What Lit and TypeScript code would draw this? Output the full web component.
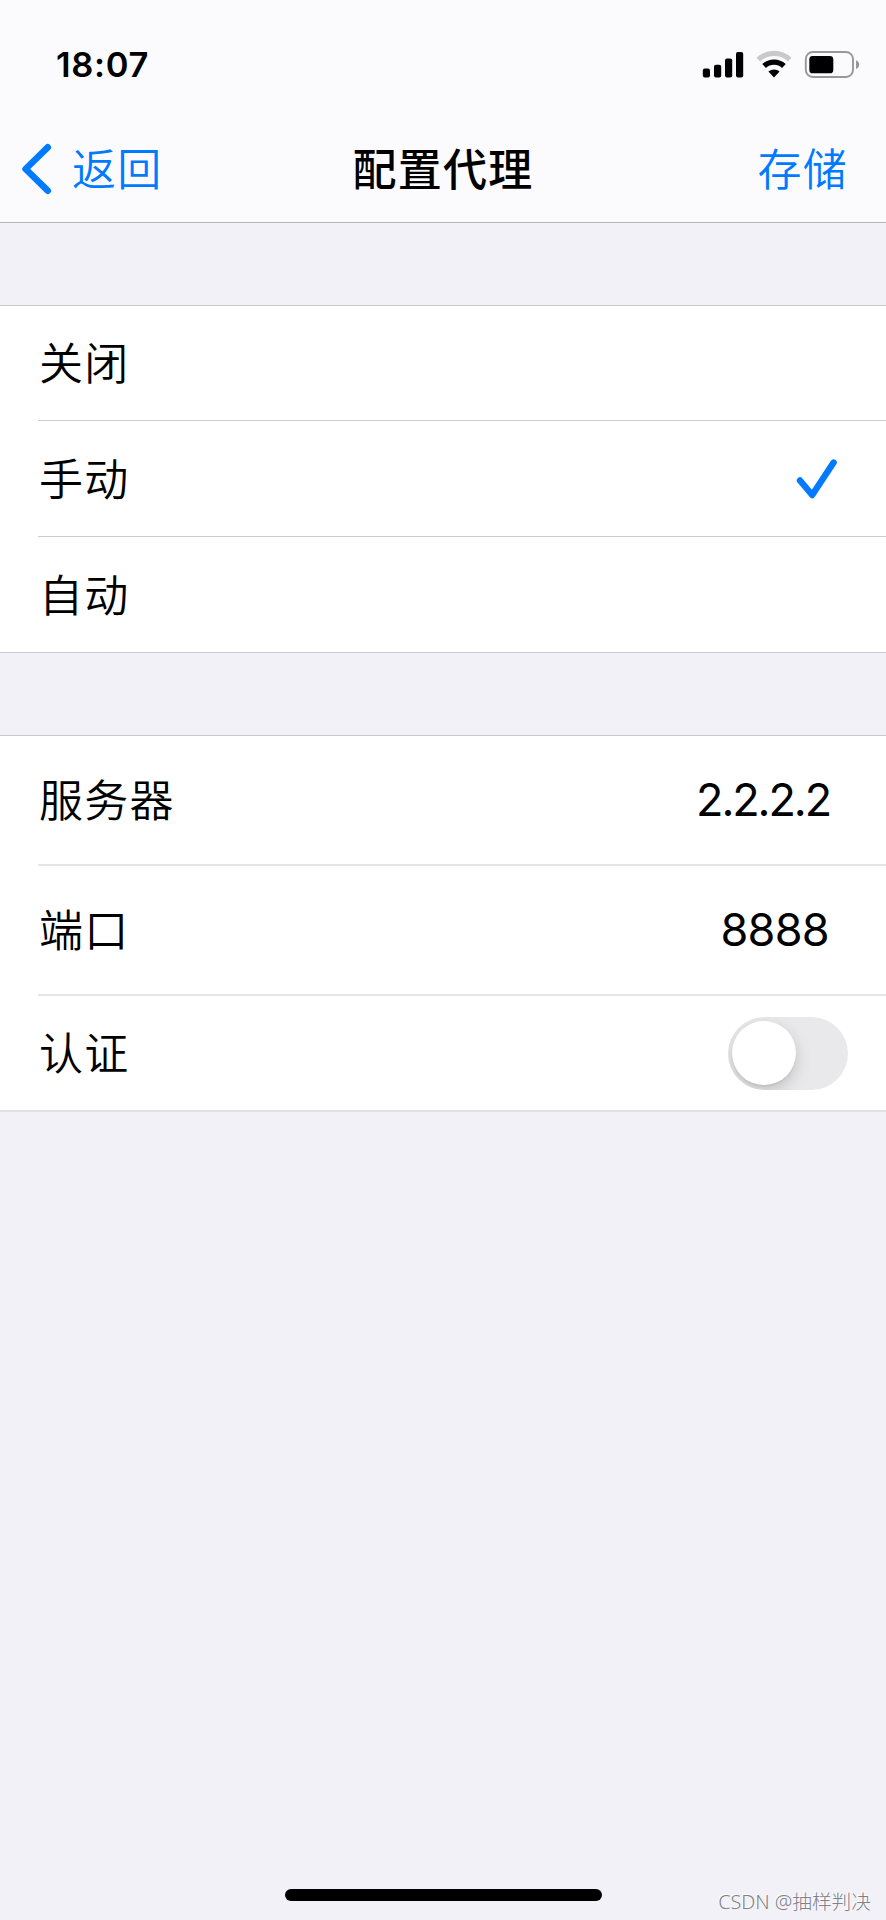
import { LitElement, html, css } from "lit";
import { customElement, property, state } from "lit/decorators.js";

const FONT = css`Inter, "Noto Sans CJK SC", sans-serif`;

@customElement("status-bar")
class StatusBar extends LitElement {
  static styles = css`
    :host { display: flex; height: 116px; padding: 0 26px 0 56px; justify-content: space-between; align-items: flex-start; box-sizing: border-box; }
    .time { font: 600 34.5px/42px ${FONT}; margin-top: 44px; letter-spacing: 0.7px; }
    .icons { display: flex; margin-top: 50px; }
    svg { display: block; }
    .signal { margin-right: 12px; }
    .wifi { margin-right: 12px; }
  `;
  render() {
    return html`
      <span class="time">18:07</span>
      <div class="icons">
        <svg class="signal" width="42" height="28" viewBox="0 0 42 28">
          <rect x="0.8" y="18.6" width="7.2" height="9" rx="2" />
          <rect x="12" y="14.7" width="7.2" height="12.9" rx="2" />
          <rect x="23" y="8.4" width="7.2" height="19.2" rx="2" />
          <rect x="34" y="2" width="7.2" height="25.6" rx="2" />
        </svg>
        <svg class="wifi" width="36" height="28" viewBox="0 0 36 28">
          <path d="M2.3 9.6A23 23 0 0 1 33.7 9.6" fill="none" stroke="#c9c9cb" stroke-width="5.2" />
          <path d="M8.1 16A14.6 14.6 0 0 1 27.9 16" fill="none" stroke="#000" stroke-width="5.4" />
          <path d="M12.4 21.6A8.3 8.3 0 0 1 23.6 21.6L18 27.4Z" />
        </svg>
        <svg width="56" height="28" viewBox="0 0 56 28">
          <rect x="1.8" y="2" width="47.2" height="25" rx="7" fill="none" stroke="#98989b" stroke-width="1.9" />
          <rect x="5.3" y="6" width="24" height="17.3" rx="3.4" />
          <path d="M52 10.2C56.3 11.6 56.3 17.6 52 19Z" fill="#98989b" />
        </svg>
      </div>
    `;
  }
}

@customElement("nav-bar")
class NavBar extends LitElement {
  static styles = css`
    :host { display: grid; grid-template-columns: 1fr auto 1fr; align-items: center; height: 107px; padding: 1px 21px 0; box-sizing: border-box; border-bottom: 1px solid #b6b6bb; font: 350 44px/60px ${FONT}; letter-spacing: 1.3px; }
    .back, .save { color: #007aff; }
    .back { display: flex; align-items: center; gap: 20px; }
    .back svg { margin-bottom: 2px; }
    .save { text-align: right; margin-right: 17px; }
    .title { font-weight: 500; }
  `;
  render() {
    return html`
      <div class="back">
        <svg width="31" height="52" viewBox="0 0 31 52"><path d="M26.7 4.3L4.6 26L26.7 47.7" fill="none" stroke="#007aff" stroke-width="6.6" stroke-linecap="round" stroke-linejoin="round" /></svg>
        <span>返回</span>
      </div>
      <div class="title">配置代理</div>
      <div class="save">存储</div>
    `;
  }
}

@customElement("toggle-switch")
class ToggleSwitch extends LitElement {
  static styles = css`
    :host { display: block; }
    .track { display: flex; align-items: center; width: 120px; height: 73px; padding: 0 5px 0 4px; box-sizing: border-box; border-radius: 37px; background: #e9e9eb; overflow: hidden; }
    .on { justify-content: flex-end; background: #34c759; }
    .knob { width: 64px; height: 64px; border-radius: 50%; background: #fff; box-shadow: 0 6px 16px rgba(0, 0, 0, 0.17), 0 2px 2px rgba(0, 0, 0, 0.05); }
  `;
  @property({ type: Boolean }) on = false;
  render() {
    return html`<div class="track ${this.on ? "on" : ""}"><div class="knob"></div></div>`;
  }
}

@customElement("app-root")
class AppRoot extends LitElement {
  static styles = css`
    :host { display: flex; flex-direction: column; position: relative; height: 1920px; background: #f2f1f8; color: #000; font: 400 44px/60px ${FONT}; }
    .top { background: #fbfbfd; }
    .group { background: #fff; border-top: 1px solid #c9c8ce; border-bottom: 1px solid #c9c8ce; padding-left: 38px; }
    .modes { margin-top: 82px; }
    .details { margin-top: 82px; border-bottom: 2px solid #dfdfe4; }
    .row { display: flex; align-items: center; justify-content: space-between; box-sizing: border-box; height: 116px; border-bottom: 1px solid #cdcdcf; }
    .modes .row:first-child { height: 115px; }
    .modes .row:last-child { border-bottom: 0; height: 115px; }
    .details .row { height: 130px; border-bottom: 2px solid #e5e5e6; }
    .details .row:last-child { border-bottom: 0; height: 114px; }
    .label { letter-spacing: 1.3px; font-weight: 350; margin-left: 1px; padding-top: 2px; }
    .value { font-size: 45px; margin-right: 57px; letter-spacing: -0.7px; }
    .address { letter-spacing: -2.1px; margin-right: 56px; }
    .check { margin-right: 48px; }
    toggle-switch { margin-right: 38px; }
    .home { width: 317px; height: 12px; border-radius: 6px; background: #000; margin: auto auto 19px 285px; }
    .mark { position: absolute; right: 15px; bottom: 3px; font: 300 19.7px/30px "Noto Sans", "Noto Sans CJK SC", sans-serif; color: #808084; text-shadow: -1px -1px 0 #fff; }
  `;
  @state() mode = "手动";
  render() {
    return html`
      <div class="top"><status-bar></status-bar><nav-bar></nav-bar></div>
      <div class="group modes">
        ${["关闭", "手动", "自动"].map(
          (m) => html`<div class="row" @click=${() => (this.mode = m)}>
            <span class="label">${m}</span>
            ${m === this.mode
              ? html`<svg class="check" width="42" height="42" viewBox="0 0 42 42"><path d="M4 22.5L16.2 37L37.6 4.5" fill="none" stroke="#007aff" stroke-width="6.4" stroke-linecap="round" stroke-linejoin="round" /></svg>`
              : ""}
          </div>`
        )}
      </div>
      <div class="group details">
        <div class="row"><span class="label">服务器</span><span class="value address">2.2.2.2</span></div>
        <div class="row"><span class="label">端口</span><span class="value">8888</span></div>
        <div class="row"><span class="label">认证</span><toggle-switch></toggle-switch></div>
      </div>
      <div class="home"></div>
      <div class="mark">CSDN @抽样判决</div>
    `;
  }
}
